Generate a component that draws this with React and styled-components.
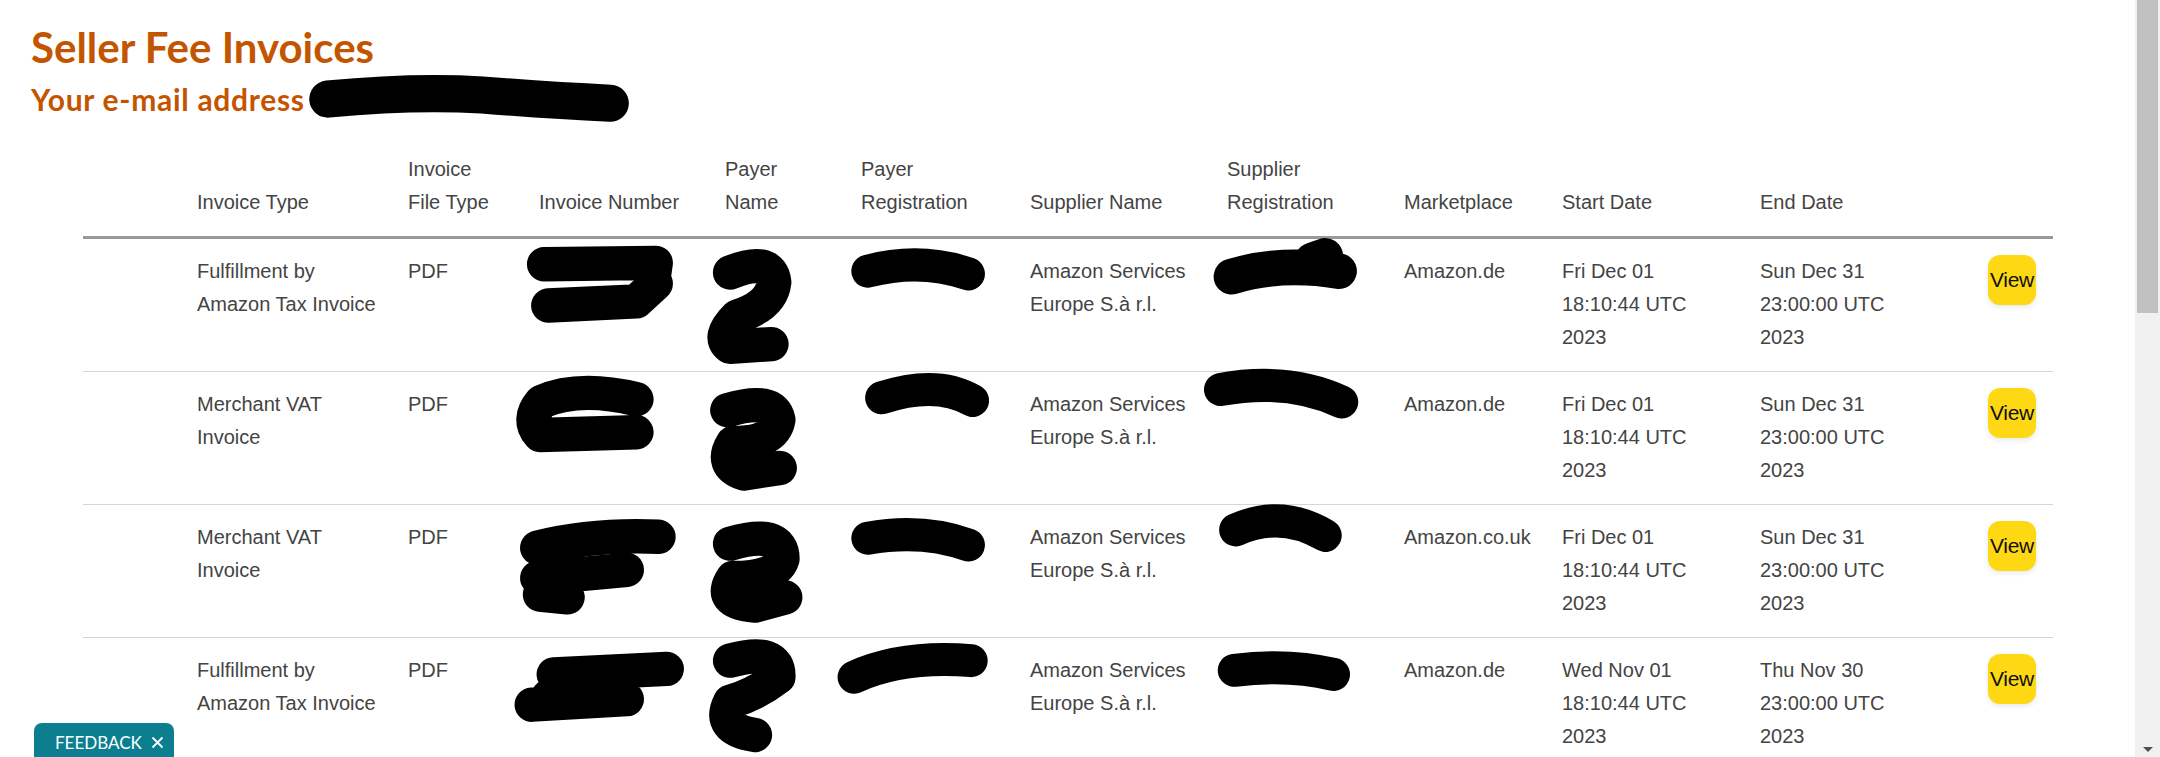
import React from "react"
import styled, { createGlobalStyle } from "styled-components"

const GlobalStyle = createGlobalStyle`
  html, body {
    margin: 0;
    padding: 0;
    height: 100%;
    overflow: hidden;
    background: #fff;
  }
  body {
    font-family: "Liberation Sans", Arial, sans-serif;
  }
`

const columns = [
  { width: 114, label: [] },
  { width: 211, label: ["Invoice Type"] },
  { width: 131, label: ["Invoice", "File Type"] },
  { width: 186, label: ["Invoice Number"] },
  { width: 136, label: ["Payer", "Name"] },
  { width: 169, label: ["Payer", "Registration"] },
  { width: 197, label: ["Supplier Name"] },
  { width: 177, label: ["Supplier", "Registration"] },
  { width: 158, label: ["Marketplace"] },
  { width: 198, label: ["Start Date"] },
  { width: 228, label: ["End Date"] },
  { width: 65, label: [] },
]

const supplier = ["Amazon Services", "Europe S.à r.l."]
const decStart = ["Fri Dec 01", "18:10:44 UTC", "2023"]
const decEnd = ["Sun Dec 31", "23:00:00 UTC", "2023"]

const invoices = [
  { type: ["Fulfillment by", "Amazon Tax Invoice"], market: "Amazon.de", start: decStart, end: decEnd },
  { type: ["Merchant VAT", "Invoice"], market: "Amazon.de", start: decStart, end: decEnd },
  { type: ["Merchant VAT", "Invoice"], market: "Amazon.co.uk", start: decStart, end: decEnd },
  {
    type: ["Fulfillment by", "Amazon Tax Invoice"],
    market: "Amazon.de",
    start: ["Wed Nov 01", "18:10:44 UTC", "2023"],
    end: ["Thu Nov 30", "23:00:00 UTC", "2023"],
  },
]

// marker strokes over the private values, in 1568x550 sketch units
const scribbles = [
  { d: "M238 72 Q300 66 350 69 Q400 73 443 75", w: 27 },
  // row 1
  { d: "M395 192 L476 191 L474 205", w: 25 },
  { d: "M398 222 L462 219 L476 206", w: 25 },
  { d: "M530 198 Q560 186 562 205 Q560 222 535 230 Q520 245 530 252 L560 250", w: 25 },
  { d: "M630 197 Q668 187 703 199", w: 24 },
  { d: "M894 201 Q930 190 972 197 M953 189 L962 186", w: 26 },
  // row 2
  { d: "M462 290 Q420 280 393 292 Q382 305 392 316 L462 314", w: 25 },
  { d: "M528 298 Q562 288 565 305 Q562 322 532 322 Q522 338 540 344 L566 340", w: 25 },
  { d: "M640 289 Q680 276 706 291", w: 24 },
  { d: "M886 283 Q935 274 974 292", w: 24 },
  // row 3
  { d: "M390 398 Q430 388 478 390", w: 25 },
  { d: "M390 420 L455 414 M392 432 L412 434", w: 25 },
  { d: "M530 395 Q568 384 568 406 Q564 420 532 420 Q520 438 548 440 L570 434", w: 25 },
  { d: "M630 391 Q670 384 703 396", w: 24 },
  { d: "M897 385 Q930 370 962 389", w: 24 },
  // row 4
  { d: "M402 490 L484 486 M440 490 L398 506 M386 512 L455 508", w: 25 },
  { d: "M530 480 Q566 470 565 492 Q548 505 530 510 Q520 530 548 534", w: 25 },
  { d: "M620 492 Q655 476 705 480", w: 24 },
  { d: "M896 487 Q935 482 968 490", w: 24 },
]

const Page = styled.div`
  position: relative;
  width: 2135px;
  height: 757px;
  padding-top: 23px;
  box-sizing: border-box;
  overflow: hidden;
`

const Heading = styled.header`
  padding-left: 31px;
  font-family: Lato, "Open Sans", sans-serif;
  font-weight: 700;
  color: #c45500;
`

const Title = styled.h1`
  margin: 0;
  font-size: 42px;
  line-height: 49px;
  font-weight: 700;
`

const Subtitle = styled.h2`
  margin: 10px 0 0;
  font-size: 30px;
  line-height: 35px;
  font-weight: 700;
  letter-spacing: 0.7px;
`

const Table = styled.table`
  margin: 19px 0 0 83px;
  width: 1970px;
  table-layout: fixed;
  border-collapse: separate;
  border-spacing: 0;
  font-size: 20px;
  line-height: 33px;
  color: #444;
`

const Col = styled.col`
  width: ${(p) => p.$w}px;
`

const Th = styled.th`
  padding: 17px 0;
  text-align: left;
  vertical-align: bottom;
  font-weight: 400;
  white-space: nowrap;
  border-bottom: 3px solid #999;
`

const Td = styled.td`
  padding: 16px 0 17px;
  vertical-align: top;
  white-space: nowrap;
  border-bottom: 1px solid #d5d5d5;
`

const Line = styled.div`
  height: 33px;
`

const ViewButton = styled.button`
  display: flex;
  align-items: center;
  justify-content: center;
  width: 48px;
  height: 50px;
  padding: 0;
  border: none;
  border-radius: 12px;
  background: #ffd814;
  color: #0f1111;
  font-family: "Liberation Sans", Arial, sans-serif;
  font-size: 21px;
  letter-spacing: -0.3px;
  box-shadow: 0 2px 5px rgba(213, 217, 217, 0.6);
  cursor: pointer;
`

const Redactions = styled.svg`
  position: absolute;
  top: 0;
  left: 0;
  width: 2160px;
  height: 757px;
  pointer-events: none;
`

const Feedback = styled.button`
  position: fixed;
  left: 34px;
  top: 723px;
  width: 140px;
  height: 44px;
  display: flex;
  align-items: flex-start;
  gap: 9px;
  padding: 10px 0 0 21px;
  border: none;
  border-radius: 8px 8px 0 0;
  background: #0b7f8f;
  color: #fff;
  font-family: Lato, "Open Sans", sans-serif;
  font-size: 17px;
  line-height: 20px;
  cursor: pointer;
  svg {
    margin-top: 3px;
  }
`

const ScrollTrack = styled.div`
  position: fixed;
  top: 0;
  right: 0;
  width: 25px;
  height: 100%;
  background: #f1f1f1;
`

const ScrollThumb = styled.div`
  margin-left: 2px;
  width: 21px;
  height: 313px;
  background: #c1c1c1;
`

const ScrollArrow = styled.div`
  position: absolute;
  left: 8px;
  bottom: 5px;
  border-left: 5px solid transparent;
  border-right: 5px solid transparent;
  border-top: 5px solid #505050;
`

const Lines = ({ items }) => items.map((t) => <Line key={t}>{t}</Line>)

const App = () => (
  <>
    <GlobalStyle />
    <Page>
      <Heading>
        <Title>Seller Fee Invoices</Title>
        <Subtitle>Your e-mail address</Subtitle>
      </Heading>

      <Table>
        <colgroup>
          {columns.map((c, i) => (
            <Col key={i} $w={c.width} />
          ))}
        </colgroup>
        <thead>
          <tr>
            {columns.map((c, i) => (
              <Th key={i}>
                <Lines items={c.label} />
              </Th>
            ))}
          </tr>
        </thead>
        <tbody>
          {invoices.map((inv, i) => (
            <tr key={i}>
              <Td />
              <Td>
                <Lines items={inv.type} />
              </Td>
              <Td>PDF</Td>
              <Td />
              <Td />
              <Td />
              <Td>
                <Lines items={supplier} />
              </Td>
              <Td />
              <Td>{inv.market}</Td>
              <Td>
                <Lines items={inv.start} />
              </Td>
              <Td>
                <Lines items={inv.end} />
              </Td>
              <Td>
                <ViewButton>View</ViewButton>
              </Td>
            </tr>
          ))}
        </tbody>
      </Table>

      <Redactions viewBox="0 0 1568 550" preserveAspectRatio="none">
        {scribbles.map((s, i) => (
          <path
            key={i}
            d={s.d}
            fill="none"
            stroke="#000"
            strokeWidth={s.w}
            strokeLinecap="round"
            strokeLinejoin="round"
          />
        ))}
      </Redactions>
    </Page>

    <Feedback>
      FEEDBACK
      <svg width="13" height="13" viewBox="0 0 13 13">
        <path d="M1.5 1.5 L11.5 11.5 M11.5 1.5 L1.5 11.5" stroke="#fff" strokeWidth="1.8" />
      </svg>
    </Feedback>

    <ScrollTrack>
      <ScrollThumb />
      <ScrollArrow />
    </ScrollTrack>
  </>
)

export default App
